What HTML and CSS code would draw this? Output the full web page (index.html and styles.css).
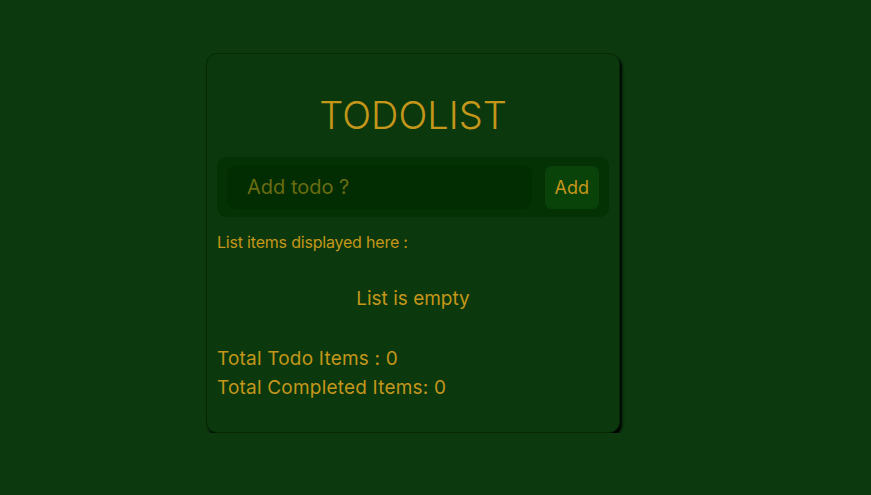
FILE: index.html
```html
<!DOCTYPE html>
<html>
<head>
	<meta charset="utf-8">
	<meta name="viewport" content="width=device-width, initial-scale=1">
	<title>Todolist</title>
	<link rel="stylesheet" href="styles.css">
</head>
<body>
	<div class="card">
		<h1 class="title">TODOLIST</h1>

		<div class="input-container">
			<input type="text" class="todo-input" placeholder="Add todo ?">
			<button class="add-btn">Add</button>
		</div>

		<p class="list-label">List items displayed here :</p>
		<p class="empty">List is empty</p>

		<div class="totals">
			<p>Total Todo Items : 0</p>
			<p>Total Completed Items: 0</p>
		</div>
	</div>
</body>
</html>
```

FILE: styles.css
```css
body {
	margin: 0;
	background-color: #0c3a0e;
	font-family: Inter, "Noto Sans", sans-serif;
	color: #c4961a;
}
.card {
	width: 392px;
	margin: 53px 0 0 206px;
	padding: 28px 10px 30px;
	background-color: #0b390d;
	border: 1px solid #062806;
	border-radius: 11px;
	box-shadow: 2px 3px 3px #000;
}
.title {
	margin: 10px 0 19px;
	text-align: center;
	font-size: 38px;
	font-weight: 300;
	line-height: 46px;
}
.input-container {
	display: flex;
	align-items: center;
	gap: 13px;
	padding: 8px 10px;
	background-color: #043204;
	border-radius: 9px;
}
.todo-input {
	flex: 1;
	min-width: 0;
	height: 44px;
	padding: 0 20px;
	border: none;
	border-radius: 9px;
	background-color: #022d02;
	color: #c4961a;
	font-family: inherit;
	font-size: 20px;
	outline: none;
}
.todo-input::placeholder {
	color: #6a6c12;
}
.add-btn {
	height: 43px;
	padding: 0 10px;
	border: none;
	border-radius: 7px;
	background-color: #0a430a;
	color: #c4961a;
	font-family: inherit;
	font-size: 18px;
}
.list-label {
	margin: 15px 0 0;
	font-size: 16px;
	letter-spacing: -0.2px;
}
.empty {
	margin: 35px 0 0;
	text-align: center;
	font-size: 19px;
}
.totals {
	margin-top: 34px;
	font-size: 19px;
	line-height: 29px;
	letter-spacing: 0.2px;
}
.totals p {
	margin: 0;
}
```
